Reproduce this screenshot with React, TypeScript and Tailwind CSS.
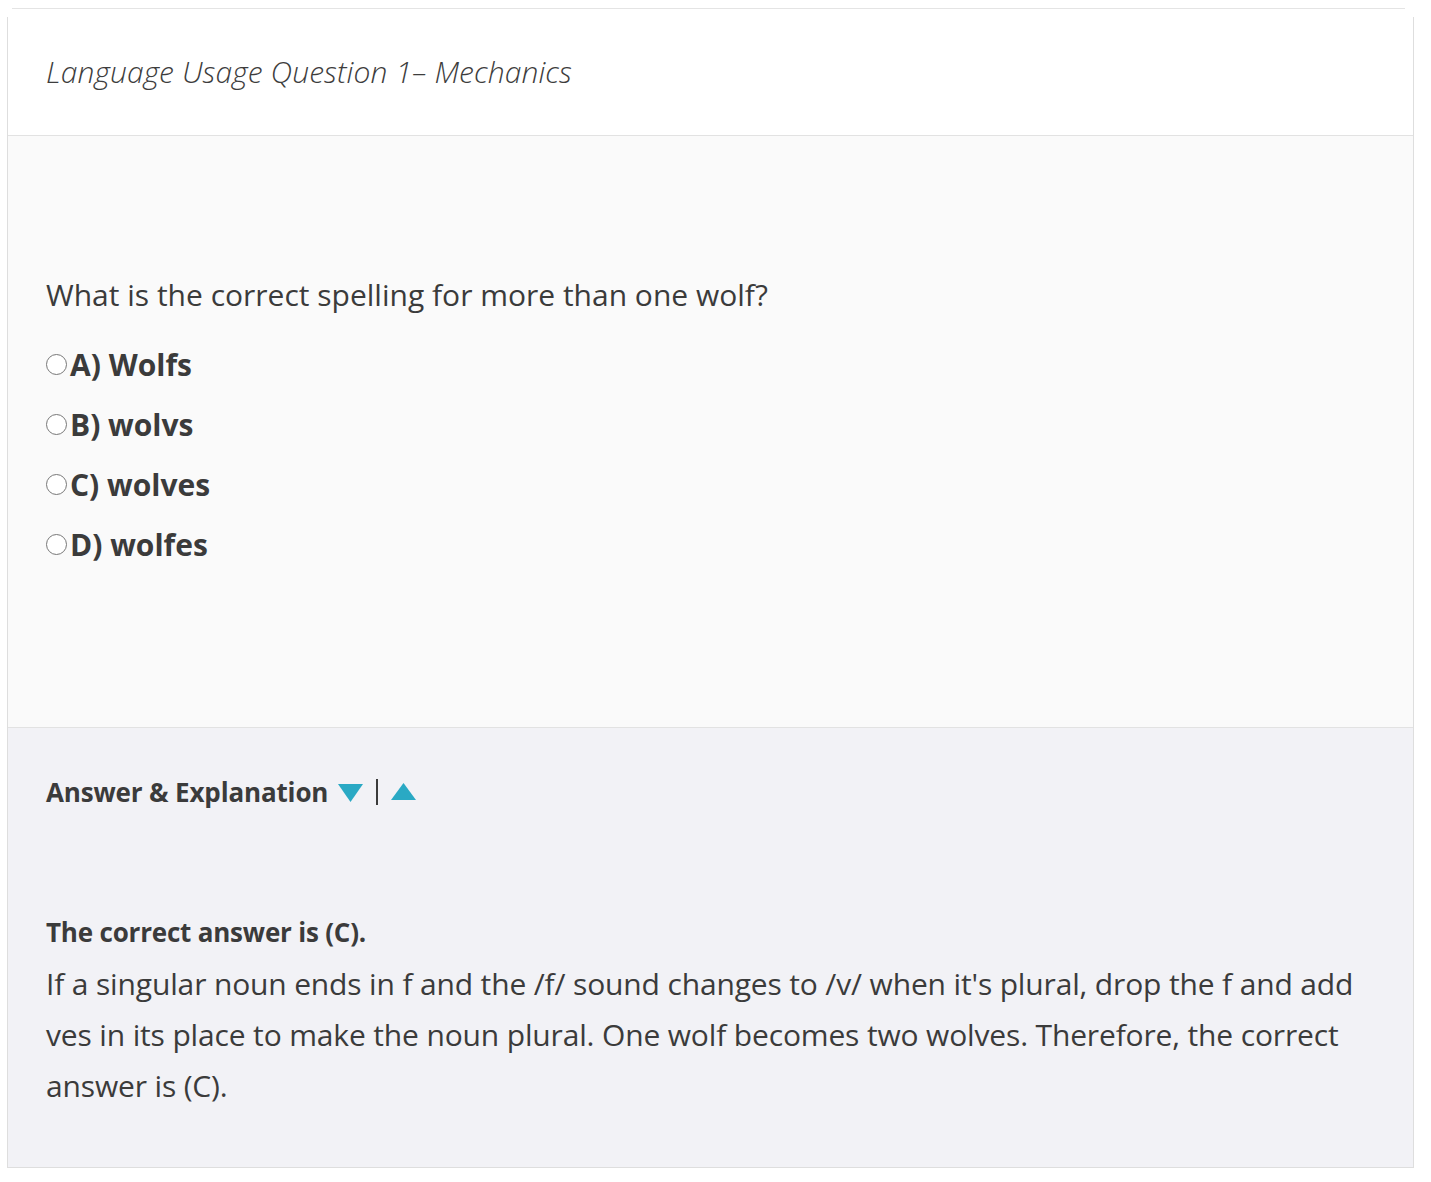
export default function App() {
  const options = ['A) Wolfs', 'B) wolvs', 'C) wolves', 'D) wolfes'];

  return (
    <div className="min-h-screen bg-white pt-[8px]" style={{ fontFamily: '"Open Sans", "Noto Sans", sans-serif' }}>
      <div className="mx-[12px] mr-[26px] h-px bg-[#e4e4e4]" />
      <div className="mt-[8px] ml-[7px] w-[1407px] border-x border-b border-[#dedede] text-[#3b3b3b]">
        {/* header */}
        <div className="flex h-[119px] items-center border-b border-[#e2e2e2] bg-white px-[38px] pb-[10px]">
          <h2 className="text-[30px] font-light italic tracking-[0.1px] text-[#3d3d3d]">
            Language Usage Question 1– Mechanics
          </h2>
        </div>

        {/* question */}
        <div className="border-b border-[#e2e2e2] bg-[#fafafa] px-[38px] pt-[139px] pb-[153px]">
          <p className="text-[30px] font-normal leading-[40px]">
            What is the correct spelling for more than one wolf?
          </p>
          <div className="mt-[19px]">
            {options.map((o) => (
              <label key={o} className="flex h-[60px] items-center">
                <span className="mr-[3px] h-[21px] w-[21px] rounded-full border-[1.5px] border-[#777] bg-white" />
                <span className="text-[30px] font-bold">{o}</span>
              </label>
            ))}
          </div>
        </div>

        {/* answer */}
        <div className="bg-[#f2f2f6] px-[38px] pt-[46px] pb-[56px]">
          <div className="flex h-[36px] items-center">
            <span className="text-[26px] font-bold tracking-[-0.15px]">Answer &amp; Explanation</span>
            <svg className="ml-[10px]" width="25" height="20" viewBox="0 0 25 20">
              <polygon points="0,2 25,2 12.5,20" fill="#2aa9c4" />
            </svg>
            <span className="mx-[13px] h-[26px] w-[2px] bg-[#3b3b3b]" />
            <svg width="25" height="20" viewBox="0 0 25 20">
              <polygon points="12.5,1 25,18 0,18" fill="#2aa9c4" />
            </svg>
          </div>
          <p className="mt-[104px] text-[26px] font-bold leading-[36px] tracking-[-0.2px]">The correct answer is (C).</p>
          <p className="mt-[8px] text-[30px] font-normal leading-[51px] tracking-[-0.15px]">
            If a singular noun ends in f and the /f/ sound changes to /v/ when it's plural, drop the f and add ves in its
            place to make the noun plural. One wolf becomes two wolves. Therefore, the correct answer is (C).
          </p>
        </div>
      </div>
    </div>
  );
}
